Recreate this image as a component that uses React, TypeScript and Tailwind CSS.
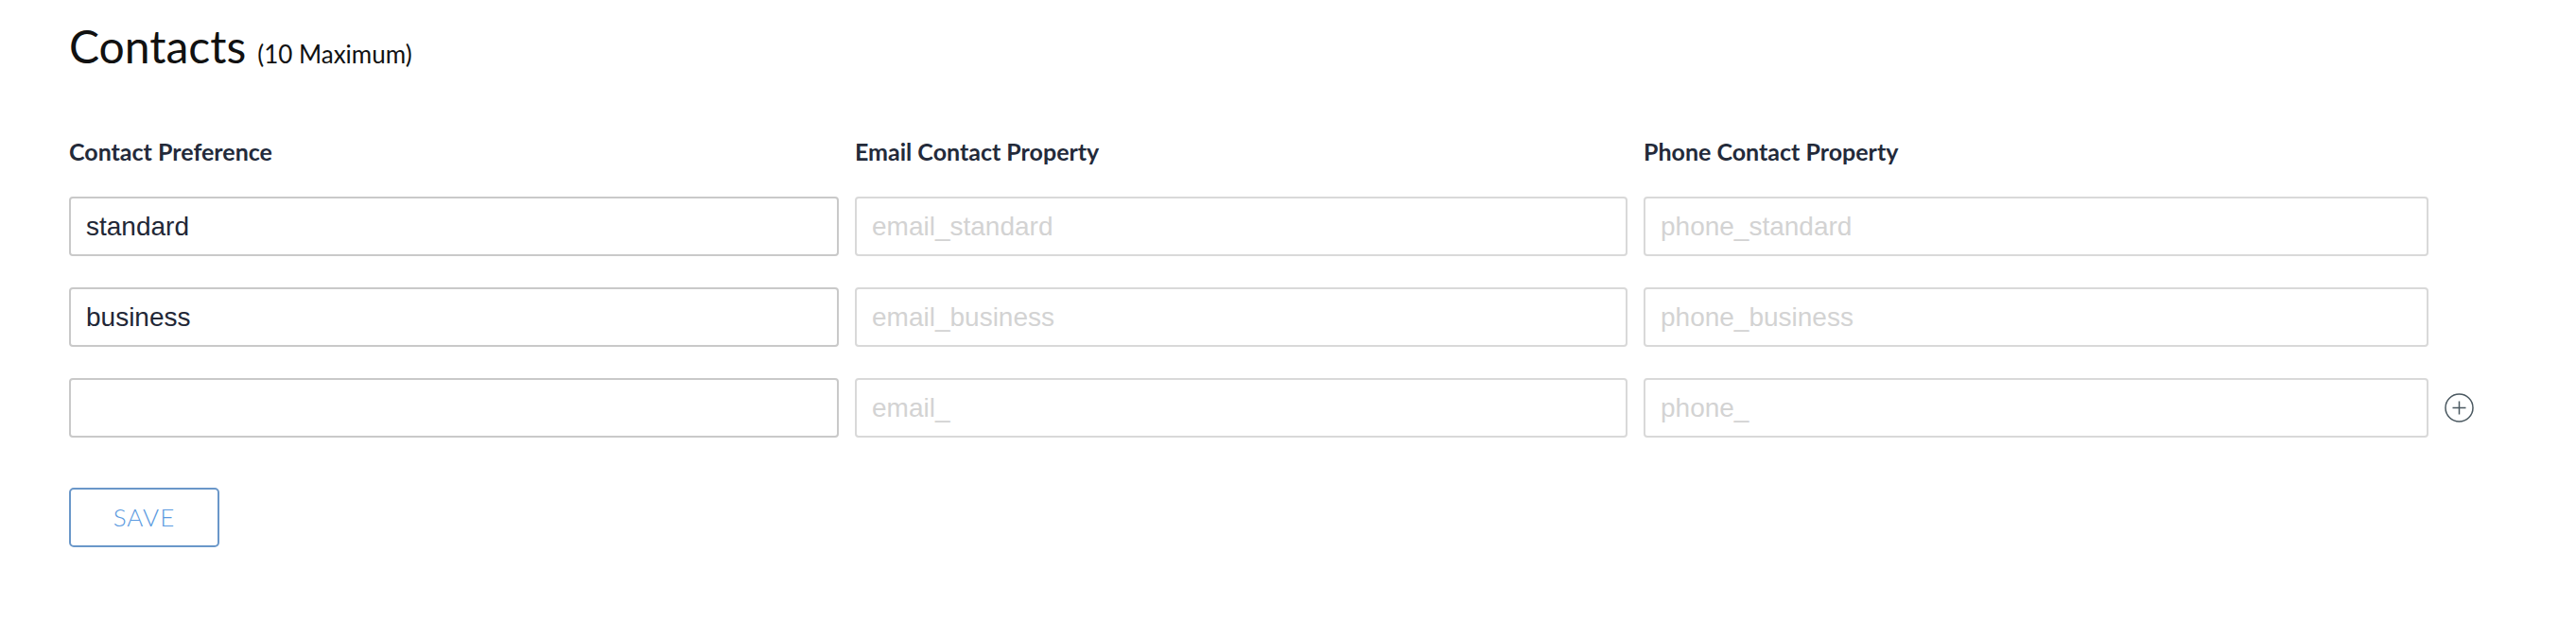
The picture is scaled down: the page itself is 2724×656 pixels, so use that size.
import React from 'react';

type Row = { pref: string; email: string; phone: string };

const rows: Row[] = [
  { pref: 'standard', email: 'email_standard', phone: 'phone_standard' },
  { pref: 'business', email: 'email_business', phone: 'phone_business' },
  { pref: '', email: 'email_', phone: 'phone_' },
];

const heading = { fontFamily: 'Lato, "Open Sans", sans-serif' };
const field = { fontFamily: '"Liberation Sans", Arial, sans-serif' };

const PlusCircle: React.FC = () => (
  <svg width="31" height="31" viewBox="0 0 31 31" fill="none" className="text-[#4a5860]">
    <circle cx="15.5" cy="15.5" r="14.5" stroke="currentColor" strokeWidth="1.5" />
    <path d="M15.5 8.5v14M8.5 15.5h14" stroke="currentColor" strokeWidth="1.5" />
  </svg>
);

export default function App() {
  return (
    <div className="min-h-screen w-full bg-white pl-[73px] pt-[26px]" style={heading}>
      {/* En-tête */}
      <h2 className="flex items-baseline leading-[46px] text-[#111]">
        <span className="text-[48px] font-normal">Contacts</span>
        <span className="ml-[12px] text-[26px]">(10 Maximum)</span>
      </h2>

      <div className="mt-[65px] grid grid-cols-[814px_817px_830px_auto] gap-x-[17px] gap-y-[33px] items-center">
        <div className="text-[25px] leading-[30px] font-bold text-[#232a3a]">Contact Preference</div>
        <div className="text-[25px] leading-[30px] font-bold text-[#232a3a]">Email Contact Property</div>
        <div className="text-[25px] leading-[30px] font-bold text-[#232a3a]">Phone Contact Property</div>
        <div></div>

        {rows.map((r, i) => (
          <React.Fragment key={i}>
            <input
              readOnly
              defaultValue={r.pref}
              style={field}
              className="h-[63px] w-full rounded-[4px] border-2 border-[#c9c9c9] bg-white pl-[16px] text-[28px] text-[#222736] outline-none"
            />
            <input
              readOnly
              placeholder={r.email}
              style={field}
              className="h-[63px] w-full rounded-[4px] border-2 border-[#d9d9d9] bg-white pl-[16px] text-[28px] text-[#222736] outline-none placeholder:text-[#d3d3d3]"
            />
            <input
              readOnly
              placeholder={r.phone}
              style={field}
              className="h-[63px] w-full rounded-[4px] border-2 border-[#d9d9d9] bg-white pl-[16px] text-[28px] text-[#222736] outline-none placeholder:text-[#d3d3d3]"
            />
            <div className="flex items-center">{i === rows.length - 1 && <PlusCircle />}</div>
          </React.Fragment>
        ))}
      </div>

      <button className="mt-[53px] h-[63px] w-[159px] rounded-[5px] border-2 border-[#6a97c9] bg-white text-[26px] font-light tracking-[1px] text-[#5b9ae0]">
        SAVE
      </button>
    </div>
  );
}
